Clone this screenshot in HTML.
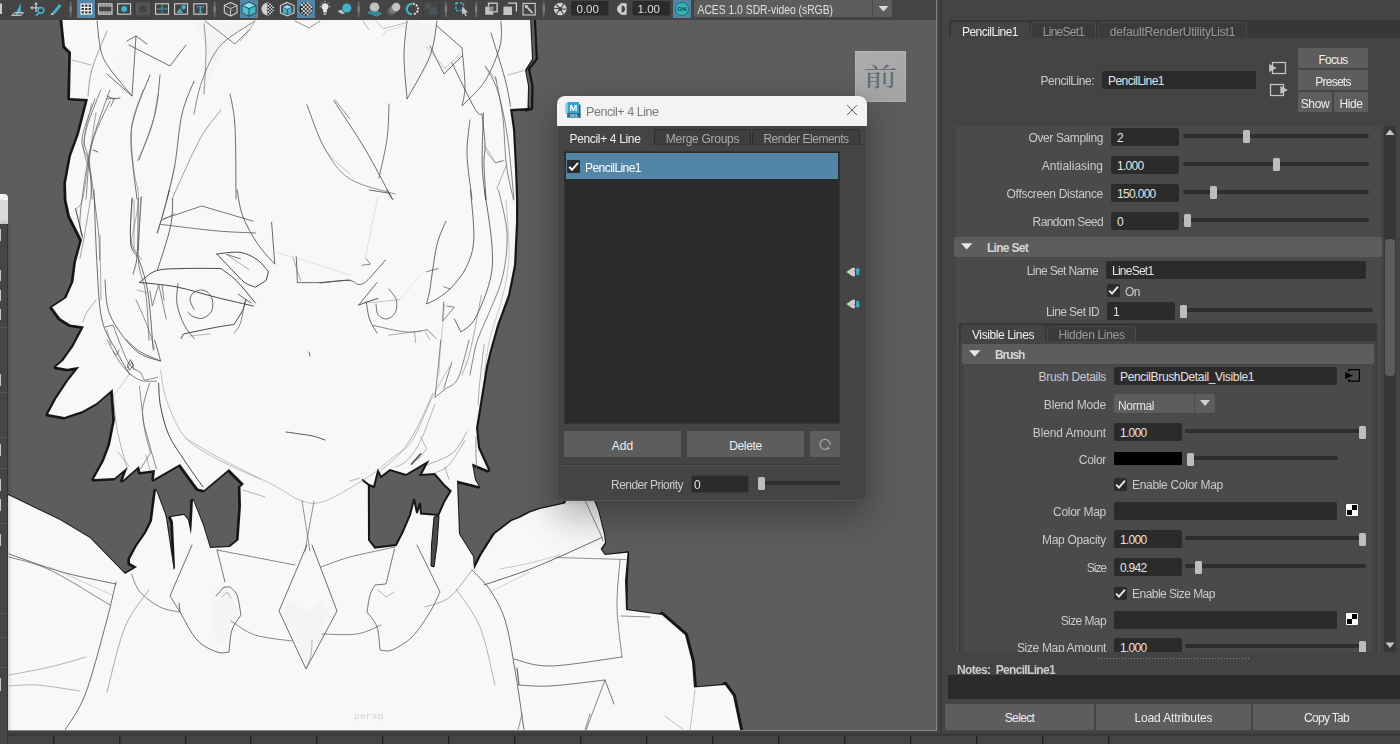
<!DOCTYPE html>
<html lang="en">
<head>
<meta charset="utf-8">
<title>Maya - Pencil+ 4 Line</title>
<style>
*{box-sizing:border-box;margin:0;padding:0}
html,body{width:1400px;height:744px;overflow:hidden;background:#444}
body{position:relative;font-family:"Liberation Sans","Noto Sans CJK JP",sans-serif;font-size:12px;color:#cacaca;line-height:1}
.a{position:absolute}
.t{position:absolute;white-space:nowrap;line-height:14px;height:14px;margin-top:1px}
.r{text-align:right}
.c{text-align:center}
.f{position:absolute;background:#2b2b2b;border-radius:2px;height:18px}
.f span{position:absolute;left:6px;top:3px;line-height:14px;color:#e4e4e4;white-space:nowrap}
.btn{position:absolute;background:#5d5d5d;color:#eee;text-align:center;white-space:nowrap;padding-top:1px}
.trk{position:absolute;height:4px;background:#2e2e2e;border-radius:2px}
.h{position:absolute;width:7px;height:13px;background:#bdbdbd;border-radius:1.5px;margin-top:1px}
.hdr{position:absolute;background:#5d5d5d;border-radius:2px}
.cb{position:absolute;width:13px;height:13px;background:#2b2b2b;border-radius:2px}
#vp{left:0;top:20px;width:936px;height:710px;background:#5d5d5d;overflow:hidden}
#tb{left:0;top:0;width:936px;height:20px;background:#444;overflow:hidden}
#rp{left:0;top:0;width:1400px;height:744px}
#dlg{left:557px;top:96px;width:310px;height:405px;background:#444;border-radius:8px;overflow:hidden;box-shadow:0 14px 36px 2px rgba(0,0,0,.30),0 0 6px rgba(0,0,0,.13)}
</style>
</head>
<body>
<!-- VIEWPORT -->
<div id="vp" class="a">
<!--VPSVG-->
<svg class="a" style="left:0;top:0" width="936" height="710" viewBox="0 20 936 710">
<g id="sil" stroke-linejoin="miter">
<path d="M62,17 L65,46 L71,52 L70,98 L88,99 L79,134 L71,156 L66,183 L66.5,200 L70,216 L82,240 L76,262 L73.4,282 L66.3,298 L52.2,307.2 L60.3,318.3 L70.3,324.4 L84,326.4 L73.4,346.6 L63.3,360.7 L56.2,366.7 L67.3,368.7 L79.4,366.7 L68.3,380.8 L56.2,399 L48.2,414 L64.3,417 L82.4,411 L96.6,403 L112.7,389 L115,420 L110,445 L104,461 L94,479 L114.5,478 L127.6,467 L123,480 L139,466 L140.4,472 L155,470 L154,479 L180,464 L198,488.5 L204,490 L229,469 L244,484 L240.5,487 L241,506 L238.6,540 L230,547 L210,548 L203,525 L197,510 L193,500 L192,520 L191,534.5 L188,520 L184,515 L171,517 L173,522 L175,568 L173.7,570 L170,545 L166,518 L165,514 L156,490 L152,521 L146,533 L137,546 L130,559 L130,563 L137,567 L125,574 L90,538 L60,520 L35,508 L6,494 L6,734 L741,734 L733,696 L725,685 L694,687.6 L692,662 L685,635 L662,615 L626,610 L625,581 L627.5,552.7 L604.7,555 L600.6,549 L605,542.6 L604,534.5 L598,510 L592.6,497 L568,497 L565,503.6 L540,509 L530,512.4 L520,517.7 L511.7,521 L494.8,534 L481.6,554.7 L474,569.8 L473,556.6 L459,534 L457,480.4 L478.8,486 L475,480 L472,463.5 L488,470 L478,448 L476,428 L480,403 L486,366 L490,350 L497,325 L508,295 L514,265 L516,222 L516,200 L515,170 L513,130 L510,109 L527.5,108 L528,86 L525,70 L532,59 L530,17 Z" transform="translate(-0.9,0.7)" fill="#141414" stroke="#141414" stroke-width="3.6" stroke-linejoin="round"/>
<g fill="none" stroke="#161616" stroke-linejoin="round" stroke-linecap="round">
<path d="M527.5,108 L510,109 L513,130 L515,170 L516,200 L516,222 L514,265 L508,295 L497,325 L490,350 L486,366 L480,403 L476,428 L478,448 L488,470" stroke-width="4.4"/>
<path d="M662,615 L685,635 L692,662 L694,687.6 M725,685 L733,696 L741,734" stroke-width="6"/>
<path d="M534.8,17 L536.8,59 L529,69 L532.5,86 L532,109 L526,110.5" stroke-width="2.2"/>
<path d="M627.5,552.7 L626,581 L626,610" stroke-width="3.4"/>
</g>
<path id="silp" d="M62,17 L65,46 L71,52 L70,98 L88,99 L79,134 L71,156 L66,183 L66.5,200 L70,216 L82,240 L76,262 L73.4,282 L66.3,298 L52.2,307.2 L60.3,318.3 L70.3,324.4 L84,326.4 L73.4,346.6 L63.3,360.7 L56.2,366.7 L67.3,368.7 L79.4,366.7 L68.3,380.8 L56.2,399 L48.2,414 L64.3,417 L82.4,411 L96.6,403 L112.7,389 L115,420 L110,445 L104,461 L94,479 L114.5,478 L127.6,467 L123,480 L139,466 L140.4,472 L155,470 L154,479 L180,464 L198,488.5 L204,490 L229,469 L244,484 L240.5,487 L241,506 L238.6,540 L230,547 L210,548 L203,525 L197,510 L193,500 L192,520 L191,534.5 L188,520 L184,515 L171,517 L173,522 L175,568 L173.7,570 L170,545 L166,518 L165,514 L156,490 L152,521 L146,533 L137,546 L130,559 L130,563 L137,567 L125,574 L90,538 L60,520 L35,508 L6,494 L6,734 L741,734 L733,696 L725,685 L694,687.6 L692,662 L685,635 L662,615 L626,610 L625,581 L627.5,552.7 L604.7,555 L600.6,549 L605,542.6 L604,534.5 L598,510 L592.6,497 L568,497 L565,503.6 L540,509 L530,512.4 L520,517.7 L511.7,521 L494.8,534 L481.6,554.7 L474,569.8 L473,556.6 L459,534 L457,480.4 L478.8,486 L475,480 L472,463.5 L488,470 L478,448 L476,428 L480,403 L486,366 L490,350 L497,325 L508,295 L514,265 L516,222 L516,200 L515,170 L513,130 L510,109 L527.5,108 L528,86 L525,70 L532,59 L530,17 Z" fill="#f8f8f8" stroke="#1c1c1c" stroke-width="1.8" paint-order="stroke fill"/>
<path d="M362,479.5 L369,485 L374,487 L378,471 L381,477 L390,470 L406,475 L427,462.6 L420.5,475 L434.6,474 L444,485 L450.6,491 L444,502 L438.4,515 L421,513.5 L420,503 L417,513 L414,499 L410,515 L402.7,532 L396,545 L375,547.6 L369,540 L368.8,485 Z" fill="#5d5d5d" stroke="#161616" stroke-width="2"/>
<path d="M434,517 L439,516 L437,545 L434,567 L431,566 L431.5,545 Z" fill="#4a4a4a" stroke="#161616" stroke-width="1"/>
</g>
<g id="shade" fill="#f0f0f0" stroke="none" opacity=".7">
<path d="M409,21 L404.5,54 L406.6,99 L430,65 L437.5,27 Z" opacity=".8"/>
<path d="M196,22 L210,60 L204,94 L222,50 L250,22 Z" opacity=".5"/>
<path d="M131,40 L134,95 L110,72 Z" opacity=".55"/>
<path d="M210,585 L228,588 L240,615 L232,630 L229,651 L215,640 Z" opacity=".6"/>
<path d="M290,600 L306,612 L322,600 L330,612 L306,667 L282,612 Z" opacity=".5"/>
</g>
<!--LINES-->
<g fill="none" stroke-linecap="round" stroke-linejoin="round">
<path d="M97.0,21.0C97.7,26.0 98.8,43.0 101.0,51.0C103.2,59.0 104.8,61.5 110.0,69.0C115.2,76.5 128.3,91.5 132.0,96.0" stroke="#404040" stroke-width="0.75"/>
<path d="M107.0,31.0C104.5,37.3 95.2,58.2 92.0,69.0C88.8,79.8 88.7,91.5 88.0,96.0" stroke="#777" stroke-width="0.7"/>
<path d="M127.0,41.0L136.0,36.0L147.0,44.0" stroke="#404040" stroke-width="0.75"/>
<path d="M129.0,45.0L170.0,66.0L186.0,45.0" stroke="#404040" stroke-width="0.75"/>
<path d="M136.0,36.0L132.0,96.0L107.0,74.0" stroke="#404040" stroke-width="0.75"/>
<path d="M150.0,75.0C147.5,81.5 138.2,102.5 135.0,114.0C131.8,125.5 130.7,129.8 131.0,144.0C131.3,158.2 136.0,189.8 137.0,199.0" stroke="#404040" stroke-width="0.75"/>
<path d="M160.0,75.0C159.2,81.5 158.5,99.8 155.0,114.0C151.5,128.2 141.7,152.3 139.0,160.0" stroke="#404040" stroke-width="0.75"/>
<path d="M194.0,81.0C192.0,86.5 185.2,100.2 182.0,114.0C178.8,127.8 177.5,149.8 175.0,164.0C172.5,178.2 168.3,193.2 167.0,199.0" stroke="#404040" stroke-width="0.75"/>
<path d="M221.0,110.0C217.5,114.8 208.2,124.2 200.0,139.0C191.8,153.8 176.7,189.0 172.0,199.0" stroke="#777" stroke-width="0.7"/>
<path d="M230.0,94.0C230.8,99.3 234.0,108.5 235.0,126.0C236.0,143.5 235.8,186.8 236.0,199.0" stroke="#404040" stroke-width="0.75"/>
<path d="M204.0,24.0C204.3,28.5 206.0,39.3 206.0,51.0C206.0,62.7 204.3,86.8 204.0,94.0" stroke="#666" stroke-width="0.7"/>
<path d="M255.0,21.0C249.2,25.2 228.8,36.0 220.0,46.0C211.2,56.0 206.3,69.7 202.0,81.0C197.7,92.3 195.3,108.5 194.0,114.0" stroke="#555" stroke-width="0.7"/>
<path d="M205.0,21.0L235.0,44.0L250.0,29.0" stroke="#555" stroke-width="0.7"/>
<path d="M295.0,21.0L309.0,28.0L320.0,21.0" stroke="#666" stroke-width="0.7"/>
<path d="M95.0,99.0C92.8,105.7 83.0,128.2 82.0,139.0C81.0,149.8 87.3,154.0 89.0,164.0C90.7,174.0 91.5,193.2 92.0,199.0" stroke="#555" stroke-width="0.7"/>
<path d="M110.0,101.0C107.0,108.2 96.0,127.7 92.0,144.0C88.0,160.3 87.0,189.8 86.0,199.0" stroke="#555" stroke-width="0.7"/>
<path d="M335.0,100.0L350.0,119.0" stroke="#666" stroke-width="0.7"/>
<path d="M307.0,105.0C310.0,112.3 317.8,137.5 325.0,149.0C332.2,160.5 345.8,169.8 350.0,174.0" stroke="#999" stroke-width="0.6"/>
<path d="M72.0,60.0L91.0,65.0" stroke="#888" stroke-width="0.6"/>
<path d="M107.0,96.0L113.0,99.0L120.0,98.0" stroke="#404040" stroke-width="0.8"/>
<path d="M93.0,150.0L98.0,152.0" stroke="#404040" stroke-width="0.8"/>
<path d="M100.7,90.0C98.0,97.6 86.6,123.5 84.7,135.7C82.8,147.9 87.0,147.0 89.3,163.0C91.6,179.0 96.7,215.5 98.4,231.7C100.1,247.9 99.4,255.3 99.6,260.0" stroke="#555" stroke-width="0.7"/>
<path d="M109.9,90.0C107.2,97.6 97.7,123.1 93.9,135.7C90.1,148.3 89.3,151.7 87.0,165.4C84.7,179.1 80.8,205.8 80.0,218.0C79.2,230.2 82.0,235.2 82.4,238.6" stroke="#555" stroke-width="0.7"/>
<path d="M91.6,103.7C90.3,110.9 83.6,134.1 83.6,147.0C83.6,159.9 91.2,168.1 91.6,181.4C92.0,194.7 87.8,214.2 85.9,227.0C84.0,239.8 81.0,252.8 80.0,258.0" stroke="#666" stroke-width="0.6"/>
<path d="M96.0,112.9C94.8,120.4 91.3,143.5 89.0,158.0C86.7,172.5 84.6,191.2 82.4,199.7C80.2,208.2 76.7,207.4 75.6,208.9" stroke="#666" stroke-width="0.6"/>
<path d="M75.6,208.9L82.4,236.3" stroke="#333" stroke-width="0.9"/>
<path d="M143.0,90.0C141.1,96.1 133.1,113.3 131.6,126.6C130.1,139.9 132.8,157.8 133.9,170.0C135.0,182.2 139.0,187.1 138.4,199.7C137.8,212.3 131.7,237.8 130.4,245.4L141.9,260.0" stroke="#777" stroke-width="0.6"/>
<path d="M157.9,94.6C156.8,100.3 154.4,117.9 151.0,128.9C147.6,140.0 139.6,155.6 137.3,160.9" stroke="#777" stroke-width="0.6"/>
<path d="M132.7,197.4C132.3,203.9 129.6,226.8 130.4,236.3C131.2,245.8 136.2,251.6 137.3,254.6" stroke="#666" stroke-width="0.6"/>
<path d="M140.7,197.4L138.4,250.0" stroke="#666" stroke-width="0.6"/>
<path d="M175.0,165.4C173.3,172.7 167.8,197.7 164.7,208.9C161.6,220.2 158.0,228.9 156.7,232.9" stroke="#777" stroke-width="0.6"/>
<path d="M175.0,213.4L162.4,220.3" stroke="#777" stroke-width="0.6"/>
<path d="M106.4,99.0L114.4,98.0L111.0,106.0" stroke="#555" stroke-width="0.7"/>
<path d="M407.0,21.0C406.5,26.8 404.0,43.0 404.0,56.0C404.0,69.0 406.5,91.8 407.0,99.0C410.8,91.8 425.0,69.0 430.0,56.0C435.0,43.0 435.8,26.8 437.0,21.0" stroke="#404040" stroke-width="0.75"/>
<path d="M437.0,26.0L462.0,48.0C462.5,54.3 465.0,76.3 465.0,86.0C465.0,95.7 462.5,102.7 462.0,106.0C465.8,101.8 478.7,91.0 485.0,81.0C491.3,71.0 497.3,56.0 500.0,46.0C502.7,36.0 500.8,25.2 501.0,21.0" stroke="#404040" stroke-width="0.75"/>
<path d="M430.0,46.0L444.0,74.0L462.0,56.0" stroke="#404040" stroke-width="0.75"/>
<path d="M452.0,63.0C455.8,70.7 470.0,100.5 475.0,109.0C480.0,117.5 480.8,113.2 482.0,114.0C482.5,119.0 484.7,135.7 485.0,144.0C485.3,152.3 483.8,154.8 484.0,164.0C484.2,173.2 485.7,193.2 486.0,199.0" stroke="#404040" stroke-width="0.75"/>
<path d="M491.0,33.0C493.3,40.7 501.8,66.8 505.0,79.0C508.2,91.2 509.6,101.5 510.5,106.0" stroke="#404040" stroke-width="0.75"/>
<path d="M470.0,120.0C469.5,125.7 466.7,140.8 467.0,154.0C467.3,167.2 471.2,191.5 472.0,199.0" stroke="#404040" stroke-width="0.75"/>
<path d="M485.0,66.0C487.0,69.8 493.3,77.7 497.0,89.0C500.7,100.3 504.2,115.7 507.0,134.0C509.8,152.3 512.8,188.2 514.0,199.0" stroke="#555" stroke-width="0.7"/>
<path d="M307.0,105.0C310.0,112.3 317.8,136.7 325.0,149.0C332.2,161.3 338.3,171.5 350.0,179.0C361.7,186.5 387.5,191.5 395.0,194.0" stroke="#666" stroke-width="0.7"/>
<path d="M334.0,101.0C338.7,108.2 354.3,131.5 362.0,144.0C369.7,156.5 375.0,166.8 380.0,176.0C385.0,185.2 390.0,195.2 392.0,199.0" stroke="#404040" stroke-width="0.75"/>
<path d="M389.0,104.0C388.7,109.8 388.7,126.7 387.0,139.0C385.3,151.3 380.3,171.5 379.0,178.0" stroke="#555" stroke-width="0.8"/>
<path d="M508.0,75.0L524.0,70.6" stroke="#888" stroke-width="0.6"/>
<path d="M485.0,150.0L495.0,163.0L503.0,161.0" stroke="#888" stroke-width="0.6"/>
<path d="M426.6,46.6L444.7,68.4L460.0,54.0" stroke="#999" stroke-width="0.5"/>
<path d="M495.5,76.8C496.7,83.5 501.0,102.0 502.8,116.7C504.6,131.4 504.6,151.1 506.4,165.0C508.2,178.9 512.4,194.2 513.6,200.0" stroke="#555" stroke-width="0.7"/>
<path d="M483.4,113.0C483.2,121.7 481.8,150.5 482.2,165.0C482.6,179.5 485.2,194.2 485.8,200.0" stroke="#444" stroke-width="0.8"/>
<path d="M484.6,145.7L495.5,162.6L504.0,160.2" stroke="#777" stroke-width="0.6"/>
<path d="M485.8,67.1L496.7,80.4" stroke="#777" stroke-width="0.6"/>
<path d="M506.4,165.0L496.7,189.0" stroke="#777" stroke-width="0.6"/>
<path d="M163.0,219.0L201.7,206.0L253.3,221.2" stroke="#555" stroke-width="0.8"/>
<path d="M160.9,224.4C170.2,225.5 201.0,229.5 216.8,230.9C232.6,232.3 249.1,232.7 255.5,233.0" stroke="#555" stroke-width="0.8"/>
<path d="M169.5,190.0L157.6,233.0" stroke="#444" stroke-width="0.8"/>
<path d="M172.7,198.6C172.3,203.3 173.0,214.8 170.5,226.6C168.0,238.4 159.8,262.4 157.6,269.6" stroke="#444" stroke-width="0.8"/>
<path d="M237.2,190.0C238.1,194.3 239.2,206.8 242.6,215.8C246.0,224.8 252.2,235.7 257.6,243.8C263.0,251.9 271.9,260.8 274.8,264.2L271.6,222.3" stroke="#444" stroke-width="0.8"/>
<path d="M139.4,282.5C142.3,280.5 149.1,272.9 156.6,270.6C164.1,268.3 173.8,268.9 184.5,268.5C195.2,268.1 214.9,268.5 221.0,268.5C223.5,270.5 230.2,274.6 236.0,280.3C241.8,286.1 252.2,299.2 255.5,303.0" stroke="#333" stroke-width="0.9"/>
<path d="M216.8,254.0C220.7,253.7 233.6,251.4 240.4,252.4C247.2,253.4 252.9,256.8 257.6,260.0C262.3,263.2 266.6,269.8 268.4,271.7L266.2,280.3L255.5,287.2C253.7,286.4 248.6,285.4 244.7,282.5C240.8,279.6 236.5,274.4 231.8,269.6C227.2,264.9 219.3,256.6 216.8,254.0" stroke="#333" stroke-width="0.9"/>
<path d="M226.5,254.5L249.0,269.6" stroke="#777" stroke-width="0.6"/>
<path d="M227.0,254.5L240.4,258.8" stroke="#555" stroke-width="0.8"/>
<path d="M139.4,282.5C145.5,283.2 163.1,284.3 176.0,286.8C188.9,289.3 203.9,294.3 216.8,297.5C229.7,300.7 247.2,304.6 253.3,306.0" stroke="#333" stroke-width="0.9"/>
<path d="M178.0,283.5C177.8,286.9 175.9,297.0 177.0,304.0C178.1,311.0 181.6,319.8 184.5,325.5C187.4,331.2 192.6,336.2 194.2,338.4" stroke="#444" stroke-width="0.8"/>
<path d="M194.0,309.4C193.3,307.8 190.2,302.7 190.0,300.0C189.8,297.3 191.2,294.7 193.0,293.0C194.8,291.3 198.1,290.1 200.6,290.0C203.1,289.9 206.0,290.8 208.0,292.5C210.0,294.2 211.7,297.1 212.4,300.0C213.1,302.9 212.9,307.3 212.0,310.0C211.1,312.7 208.9,314.6 207.0,316.0C205.1,317.4 203.1,318.5 200.6,318.5C198.1,318.5 194.1,317.1 192.0,316.0C189.9,314.9 188.7,312.7 188.0,312.0" stroke="#444" stroke-width="0.8"/>
<path d="M181.3,338.4L183.4,334.0C188.6,332.9 206.2,329.2 214.6,327.6C223.0,326.0 230.8,324.9 234.0,324.4C235.4,322.1 240.6,314.5 242.6,310.4C244.6,306.3 245.3,301.5 245.8,299.7" stroke="#333" stroke-width="0.9"/>
<path d="M238.3,294.3L251.2,303.0" stroke="#444" stroke-width="0.8"/>
<path d="M244.7,301.8C244.0,305.4 242.2,318.1 240.4,323.3C238.6,328.5 235.1,331.4 234.0,333.0" stroke="#555" stroke-width="0.7"/>
<path d="M190.0,336.0L210.0,334.0" stroke="#888" stroke-width="0.6"/>
<path d="M131.8,198.6C131.6,206.1 129.5,233.4 130.8,243.8C132.1,254.2 136.5,252.8 139.4,261.0C142.3,269.2 145.7,278.4 148.0,293.2C150.3,308.0 152.4,340.5 153.3,350.0" stroke="#444" stroke-width="0.8"/>
<path d="M138.3,198.6C138.1,207.9 138.1,241.9 137.2,254.5C136.3,267.1 133.7,270.7 133.0,273.9" stroke="#444" stroke-width="0.8"/>
<path d="M141.5,196.5C141.0,206.9 137.6,242.7 138.3,258.8C139.0,274.9 144.0,279.6 145.8,293.2C147.6,306.8 148.5,332.6 149.0,340.5" stroke="#555" stroke-width="0.7"/>
<path d="M134.0,200.0L134.0,248.0" stroke="#777" stroke-width="0.6"/>
<path d="M150.0,291.0L152.3,306.0L158.7,284.6L166.2,319.0" stroke="#555" stroke-width="0.7"/>
<path d="M162.0,284.6L164.0,300.0" stroke="#555" stroke-width="0.7"/>
<path d="M137.2,290.0L148.0,293.2" stroke="#777" stroke-width="0.6"/>
<path d="M136.0,299.7C138.0,304.4 144.9,319.4 148.0,327.6C151.1,335.8 153.3,345.4 154.4,349.0" stroke="#666" stroke-width="0.7"/>
<path d="M296.3,256.7L297.4,282.5C301.2,282.5 311.2,282.9 320.0,282.5C328.8,282.1 345.0,280.4 350.0,280.0" stroke="#444" stroke-width="0.8"/>
<path d="M293.0,257.7L300.6,280.3" stroke="#777" stroke-width="0.6"/>
<path d="M277.0,252.4C284.2,254.6 307.8,261.5 320.0,265.3C332.2,269.1 345.0,273.4 350.0,275.0" stroke="#ccc" stroke-width="0.5"/>
<path d="M94.0,190.0C94.5,202.5 95.7,243.3 97.0,265.0C98.3,286.7 98.7,305.5 102.0,320.0C105.3,334.5 112.3,342.8 117.0,352.0C121.7,361.2 127.8,371.2 130.0,375.0" stroke="#404040" stroke-width="0.75"/>
<path d="M105.0,280.0C105.8,285.8 105.0,303.3 110.0,315.0C115.0,326.7 126.7,342.3 135.0,350.0C143.3,357.7 155.8,359.2 160.0,361.0" stroke="#404040" stroke-width="0.75"/>
<path d="M100.0,235.0L101.0,300.0" stroke="#777" stroke-width="0.6"/>
<path d="M96.0,300.0C94.5,302.0 89.2,308.3 87.0,312.0C84.8,315.7 83.7,320.3 83.0,322.0" stroke="#777" stroke-width="0.6"/>
<path d="M105.0,327.0L113.0,325.0C115.5,331.2 123.5,354.2 128.0,362.0C132.5,369.8 138.0,370.3 140.0,372.0" stroke="#555" stroke-width="0.7"/>
<path d="M107.0,330.0L111.0,345.0" stroke="#777" stroke-width="0.6"/>
<path d="M113.0,352.0L117.0,355.0L119.0,350.0" stroke="#555" stroke-width="0.7"/>
<path d="M127.0,368.0L132.0,362.0L134.0,370.0" stroke="#555" stroke-width="0.7"/>
<path d="M369.5,190.0L388.8,193.2L393.0,199.7" stroke="#444" stroke-width="0.8"/>
<path d="M386.7,190.0L391.0,196.0" stroke="#444" stroke-width="0.8"/>
<path d="M378.0,196.5L365.0,258.8" stroke="#ccc" stroke-width="0.5"/>
<path d="M320.0,283.0C324.7,282.6 341.7,280.0 348.0,280.3C354.3,280.6 356.0,283.9 357.6,284.6C359.0,284.1 361.5,285.5 366.2,281.4C370.9,277.3 382.4,263.5 385.6,259.9" stroke="#444" stroke-width="0.8"/>
<path d="M362.0,265.3L370.5,264.2L366.2,258.8" stroke="#555" stroke-width="0.7"/>
<path d="M358.7,305.0L377.0,282.5" stroke="#444" stroke-width="0.8"/>
<path d="M358.7,305.0C361.2,304.1 370.6,300.8 373.8,299.7C377.0,298.6 377.3,298.8 378.0,298.6" stroke="#333" stroke-width="0.9"/>
<path d="M366.2,301.8C366.8,304.7 367.7,313.8 369.5,319.0C371.3,324.2 375.8,330.7 377.0,333.0" stroke="#444" stroke-width="0.8"/>
<path d="M388.8,289.0C390.1,290.8 395.2,295.8 396.3,299.7C397.4,303.6 396.9,309.4 395.3,312.6C393.7,315.8 389.6,318.6 386.7,319.0C383.8,319.4 379.8,317.2 378.0,314.7C376.2,312.2 376.3,305.8 376.0,304.0" stroke="#555" stroke-width="0.8"/>
<path d="M366.0,303.0L399.6,299.7" stroke="#888" stroke-width="0.5"/>
<path d="M373.8,325.5C379.2,326.6 397.1,331.3 406.0,332.0C414.9,332.7 423.9,330.2 427.5,329.8L436.0,338.4" stroke="#555" stroke-width="0.7"/>
<path d="M388.8,335.2L421.0,330.9" stroke="#777" stroke-width="0.6"/>
<path d="M414.6,332.0L415.7,342.7" stroke="#777" stroke-width="0.6"/>
<path d="M425.4,332.0L430.0,340.0" stroke="#888" stroke-width="0.6"/>
<path d="M445.8,221.2C444.4,225.0 439.5,234.7 437.2,243.8C434.9,252.9 433.1,268.1 431.8,276.0C430.6,283.9 430.6,286.3 429.7,291.0C428.8,295.7 427.0,301.8 426.5,304.0C428.3,303.1 433.1,301.3 437.2,298.6C441.3,295.9 446.4,293.0 451.2,287.8C456.0,282.6 462.4,275.4 466.2,267.4C470.0,259.3 473.1,252.4 473.8,239.5C474.5,226.6 471.1,198.2 470.5,190.0" stroke="#444" stroke-width="0.8"/>
<path d="M426.5,271.7L438.3,268.5" stroke="#555" stroke-width="0.7"/>
<path d="M443.7,286.8L450.0,289.0" stroke="#555" stroke-width="0.7"/>
<path d="M484.5,190.0C485.8,199.3 491.1,230.9 492.0,246.0C492.9,261.1 492.9,268.1 490.0,280.3C487.1,292.5 479.7,310.4 474.8,319.0C469.9,327.6 463.2,329.8 460.9,332.0L454.4,319.0" stroke="#444" stroke-width="0.8"/>
<path d="M443.7,301.8L442.6,321.2L454.4,307.2L447.0,306.0" stroke="#555" stroke-width="0.7"/>
<path d="M498.5,190.0C499.9,197.2 506.3,218.7 507.0,233.0C507.7,247.3 505.6,263.1 502.8,276.0C500.0,288.9 494.0,300.4 490.0,310.4C486.0,320.4 481.5,329.6 479.0,336.2C476.5,342.8 476.3,343.5 474.8,350.0C473.3,356.5 470.8,370.8 470.0,375.0" stroke="#555" stroke-width="0.7"/>
<path d="M481.3,295.4C479.5,304.5 473.7,336.7 470.5,350.0C467.3,363.3 463.4,370.8 462.0,375.0" stroke="#777" stroke-width="0.6"/>
<path d="M444.7,304.0C444.0,311.7 441.3,338.2 440.4,350.0C439.4,361.8 439.2,370.8 439.0,375.0" stroke="#999" stroke-width="0.5"/>
<path d="M506.0,200.0C506.5,209.2 509.5,239.2 509.0,255.0C508.5,270.8 506.2,281.2 503.0,295.0C499.8,308.8 493.2,324.7 490.0,338.0C486.8,351.3 485.0,368.8 484.0,375.0" stroke="#999" stroke-width="0.5"/>
<path d="M420.0,275.0L400.0,300.0" stroke="#ccc" stroke-width="0.4"/>
<path d="M309.0,352.0L310.0,356.0" stroke="#444" stroke-width="0.8"/>
<path d="M286.0,432.0C288.3,432.3 295.5,433.3 300.0,434.0C304.5,434.7 308.8,435.0 313.0,436.0C317.2,437.0 323.0,439.3 325.0,440.0" stroke="#444" stroke-width="0.9"/>
<path d="M185.0,438.0C191.7,441.8 210.0,453.0 225.0,461.0C240.0,469.0 262.2,479.3 275.0,486.0C287.8,492.7 293.7,498.5 302.0,501.0C310.3,503.5 314.0,505.0 325.0,501.0C336.0,497.0 356.8,484.2 368.0,477.0C379.2,469.8 384.7,464.0 392.0,458.0C399.3,452.0 405.3,451.0 412.0,441.0C418.7,431.0 425.7,410.5 432.0,398.0C438.3,385.5 447.0,371.3 450.0,366.0" stroke="#999" stroke-width="0.6"/>
<path d="M302.0,501.0L310.0,551.0" stroke="#666" stroke-width="0.7"/>
<path d="M314.0,501.0L305.0,551.0" stroke="#666" stroke-width="0.7"/>
<path d="M243.0,490.0L265.0,497.0" stroke="#888" stroke-width="0.6"/>
<path d="M350.0,481.0L360.0,478.0" stroke="#888" stroke-width="0.6"/>
<path d="M118.0,452.0L129.0,466.0" stroke="#888" stroke-width="0.6"/>
<path d="M146.0,455.0L150.0,470.0" stroke="#888" stroke-width="0.6"/>
<path d="M158.6,383.3C158.9,387.2 158.9,397.9 160.6,406.5C162.3,415.1 164.7,425.7 168.7,434.8C172.7,443.9 179.1,452.3 184.8,461.0C190.5,469.7 200.0,482.7 203.0,487.0" stroke="#333" stroke-width="0.9"/>
<path d="M160.6,370.0C161.6,375.1 162.7,389.4 166.7,400.5C170.7,411.6 176.4,427.1 184.8,436.8C193.2,446.6 204.5,452.0 217.0,459.0C229.5,466.0 252.8,475.7 260.0,479.0" stroke="#999" stroke-width="0.6"/>
<path d="M149.6,383.3C148.4,388.2 142.5,402.4 142.5,412.6C142.5,422.9 147.2,435.4 149.6,444.8C151.9,454.2 155.4,465.0 156.6,469.0" stroke="#555" stroke-width="0.7"/>
<path d="M139.5,386.4C140.3,393.4 142.7,417.6 144.5,428.7C146.3,439.8 149.6,448.9 150.6,452.9L140.5,469.0" stroke="#666" stroke-width="0.7"/>
<path d="M113.3,394.4C114.0,400.4 114.9,418.3 117.3,430.7C119.7,443.1 125.7,462.6 127.4,469.0" stroke="#888" stroke-width="0.6"/>
<path d="M107.2,340.0C109.0,343.3 114.8,354.6 118.3,360.0C121.8,365.4 124.7,368.9 128.4,372.3C132.1,375.7 135.8,378.8 140.5,380.3C145.2,381.8 153.9,381.1 156.6,381.3" stroke="#555" stroke-width="0.7"/>
<path d="M130.4,360.0L133.4,365.2L129.4,370.2L127.4,365.2L130.4,360.0" stroke="#444" stroke-width="0.8"/>
<path d="M126.4,340.0C128.8,342.0 134.8,348.5 140.5,352.0C146.2,355.5 157.2,359.5 160.6,361.0C160.1,359.2 158.6,353.5 157.6,350.0C156.6,346.5 155.1,341.7 154.6,340.0" stroke="#444" stroke-width="0.8"/>
<path d="M129.4,373.3C128.2,375.1 125.0,380.7 122.3,384.4C119.6,388.1 114.8,393.6 113.3,395.4" stroke="#999" stroke-width="0.5"/>
<path d="M140.5,372.3L144.5,380.3L157.6,377.3" stroke="#666" stroke-width="0.7"/>
<path d="M440.8,340.0C440.0,348.4 436.8,380.8 435.8,390.4C434.8,400.0 435.0,396.3 434.8,397.5C436.5,396.1 440.9,392.6 444.8,389.4C448.7,386.2 454.0,386.5 458.0,378.3C462.0,370.1 467.2,346.4 469.0,340.0" stroke="#555" stroke-width="0.7"/>
<path d="M451.9,362.2L443.8,388.4" stroke="#555" stroke-width="0.7"/>
<path d="M432.7,393.4C430.0,399.3 422.0,418.8 416.6,428.7C411.2,438.6 406.6,445.8 400.5,452.9C394.4,459.9 383.7,468.0 380.3,471.0" stroke="#888" stroke-width="0.6"/>
<path d="M434.8,404.5C432.4,410.6 425.3,431.4 420.6,440.8C415.9,450.2 410.8,456.6 406.5,461.0C402.2,465.4 396.9,466.0 395.0,467.0" stroke="#888" stroke-width="0.6"/>
<path d="M484.2,344.0C483.5,350.1 481.0,370.2 480.0,380.3C479.0,390.4 478.3,400.5 478.0,404.5" stroke="#777" stroke-width="0.6"/>
<path d="M467.0,431.7C464.6,435.2 459.6,447.3 452.9,452.9C446.2,458.4 431.1,463.0 426.7,465.0" stroke="#777" stroke-width="0.6"/>
<path d="M465.0,440.8C462.3,444.8 453.9,459.6 448.9,465.0C443.9,470.4 437.1,471.7 434.8,473.0" stroke="#888" stroke-width="0.6"/>
<path d="M420.6,436.8L426.7,448.9L416.6,461.0" stroke="#888" stroke-width="0.6"/>
<path d="M420.6,454.0L411.6,464.0" stroke="#555" stroke-width="1.8"/>
<path d="M476.0,436.8C476.0,440.2 475.8,450.3 476.0,457.0C476.2,463.7 477.2,473.7 477.5,477.0" stroke="#666" stroke-width="0.7"/>
<path d="M444.8,467.0L448.9,479.0" stroke="#777" stroke-width="0.6"/>
<path d="M307.0,545.0L279.0,611.0L306.0,669.0L337.0,611.0L312.0,545.0" stroke="#404040" stroke-width="0.75"/>
<path d="M192.0,545.0L170.0,596.0C171.7,598.7 175.5,604.7 180.0,612.0C184.5,619.3 190.8,633.3 197.0,640.0C203.2,646.7 211.7,650.0 217.0,652.0C222.3,654.0 227.0,652.0 229.0,652.0C229.5,648.3 230.0,636.2 232.0,630.0C234.0,623.8 239.5,617.5 241.0,615.0C240.3,611.7 238.8,599.7 237.0,595.0C235.2,590.3 231.2,588.3 230.0,587.0L224.0,587.0L216.0,596.0" stroke="#404040" stroke-width="0.75"/>
<path d="M217.0,550.0L225.0,582.0" stroke="#555" stroke-width="0.8"/>
<path d="M179.0,603.0L180.0,612.0" stroke="#444" stroke-width="0.8"/>
<path d="M131.5,574.0C132.9,577.0 135.2,586.5 140.0,592.0C144.8,597.5 153.5,603.7 160.0,607.0C166.5,610.3 175.8,611.2 179.0,612.0" stroke="#555" stroke-width="0.7"/>
<path d="M231.0,621.0C235.0,623.3 244.8,631.7 255.0,635.0C265.2,638.3 285.8,640.0 292.0,641.0" stroke="#555" stroke-width="0.7"/>
<path d="M217.0,550.0L295.0,565.0" stroke="#555" stroke-width="0.7"/>
<path d="M321.0,567.0C325.8,565.3 337.7,560.3 350.0,557.0C362.3,553.7 387.5,548.7 395.0,547.0" stroke="#555" stroke-width="0.7"/>
<path d="M322.0,634.0C327.8,634.0 347.2,635.5 357.0,634.0C366.8,632.5 377.0,626.5 381.0,625.0" stroke="#555" stroke-width="0.7"/>
<path d="M312.0,640.0C311.8,642.5 312.0,650.2 311.0,655.0C310.0,659.8 306.8,666.7 306.0,669.0" stroke="#888" stroke-width="0.6"/>
<path d="M9.0,554.0C17.8,557.0 44.2,567.0 62.0,572.0C79.8,577.0 107.0,582.0 116.0,584.0" stroke="#404040" stroke-width="0.75"/>
<path d="M9.0,557.0C15.8,559.2 33.2,562.0 50.0,570.0C66.8,578.0 100.0,599.2 110.0,605.0" stroke="#555" stroke-width="0.7"/>
<path d="M50.0,567.0L112.0,595.0" stroke="#aaa" stroke-width="0.5"/>
<path d="M116.0,582.0C114.2,589.5 110.2,608.2 105.0,627.0C99.8,645.8 91.7,677.8 85.0,695.0C78.3,712.2 68.3,724.2 65.0,730.0" stroke="#404040" stroke-width="0.75"/>
<path d="M149.0,590.0C145.0,596.2 132.0,610.0 125.0,627.0C118.0,644.0 110.0,681.2 107.0,692.0" stroke="#777" stroke-width="0.6"/>
<path d="M9.0,675.0C15.8,673.7 37.2,670.0 50.0,667.0C62.8,664.0 80.0,658.7 86.0,657.0" stroke="#888" stroke-width="0.6"/>
<path d="M9.0,686.0C13.7,685.8 25.2,684.2 37.0,685.0C48.8,685.8 72.8,690.0 80.0,691.0" stroke="#888" stroke-width="0.6"/>
<path d="M222.0,597.0L227.0,592.0L231.0,598.0" stroke="#888" stroke-width="0.6"/>
<path d="M394.5,549.0L386.0,584.0L375.0,585.0C374.2,586.7 371.3,590.5 370.0,595.0C368.7,599.5 367.5,609.2 367.0,612.0C368.7,614.5 374.8,620.7 377.0,627.0C379.2,633.3 379.5,646.2 380.0,650.0C382.0,650.0 386.7,652.2 392.0,650.0C397.3,647.8 405.7,643.3 412.0,637.0C418.3,630.7 425.3,619.5 430.0,612.0C434.7,604.5 438.3,595.3 440.0,592.0L417.0,545.0" stroke="#555" stroke-width="0.8"/>
<path d="M378.0,590.0L386.0,597.0L394.0,592.0" stroke="#888" stroke-width="0.6"/>
<path d="M425.0,607.0C429.2,605.3 442.2,603.2 450.0,597.0C457.8,590.8 468.3,574.5 472.0,570.0" stroke="#777" stroke-width="0.6"/>
<path d="M472.0,570.0C475.0,573.3 484.5,581.7 490.0,590.0C495.5,598.3 500.8,606.7 505.0,620.0C509.2,633.3 511.8,651.7 515.0,670.0C518.2,688.3 522.5,720.0 524.0,730.0" stroke="#404040" stroke-width="0.75"/>
<path d="M456.0,589.0C460.0,595.3 473.5,611.0 480.0,627.0C486.5,643.0 492.5,675.3 495.0,685.0" stroke="#888" stroke-width="0.6"/>
<path d="M490.0,592.0L530.0,572.0" stroke="#aaa" stroke-width="0.5"/>
<path d="M556.0,557.5L626.0,559.5" stroke="#666" stroke-width="0.7"/>
<path d="M620.0,560.0C619.5,567.8 616.7,590.8 617.0,607.0C617.3,623.2 621.2,648.7 622.0,657.0" stroke="#555" stroke-width="0.7"/>
<path d="M514.0,659.0C520.0,660.2 532.0,666.3 550.0,666.0C568.0,665.7 610.0,658.5 622.0,657.0" stroke="#555" stroke-width="0.8"/>
<path d="M519.0,685.0C524.2,685.2 535.7,686.8 550.0,686.0C564.3,685.2 595.8,681.0 605.0,680.0L614.0,704.0" stroke="#555" stroke-width="0.8"/>
<path d="M605.0,680.0L586.0,730.0" stroke="#555" stroke-width="0.7"/>
<path d="M621.0,616.0L650.0,617.0" stroke="#666" stroke-width="0.7"/>
<path d="M517.0,668.0L519.0,685.0" stroke="#666" stroke-width="1.2"/>
<path d="M665.0,716.0L697.0,740.0" stroke="#999" stroke-width="0.6"/>
<path d="M522.0,714.0L518.0,730.0" stroke="#666" stroke-width="0.7"/>
<path d="M590.0,714.0L585.0,730.0" stroke="#666" stroke-width="0.7"/>
<path d="M695.0,690.0L690.0,731.0" stroke="#999" stroke-width="0.6"/>
<path d="M585.0,500.0C586.5,503.3 591.2,513.8 594.0,520.0C596.8,526.2 600.6,534.0 602.0,537.5C603.4,541.0 602.4,540.4 602.5,541.0" stroke="#555" stroke-width="0.7"/>
<path d="M484.0,585.0C490.8,582.7 512.9,575.5 525.0,571.0C537.1,566.5 543.8,563.6 556.6,558.0C569.4,552.4 594.4,540.9 602.0,537.5" stroke="#444" stroke-width="0.8"/>
<path d="M500.0,569.0C505.0,568.0 520.0,565.3 530.0,563.0C540.0,560.7 555.0,556.3 560.0,555.0" stroke="#999" stroke-width="0.5"/>
<path d="M362.9,20.9L368.6,29.4" stroke="#888" stroke-width="0.6"/>
<path d="M375.7,20.9L383.6,28.7L407.9,22.3" stroke="#999" stroke-width="0.6"/>
<path d="M382.0,36.0L386.0,31.0L407.0,25.0" stroke="#bbb" stroke-width="0.5"/>
<path d="M240.0,41.0C241.3,39.5 245.6,35.1 248.0,32.0C250.4,28.9 253.2,23.9 254.3,22.3" stroke="#888" stroke-width="0.6"/>
</g>
<!--/LINES-->
</svg>
<!--/VPSVG-->
<div class="a" style="left:855px;top:31px;width:51px;height:51px;background:linear-gradient(160deg,#adadad,#a3a3a3);box-shadow:inset 0 0 0 1px rgba(255,255,255,.13)"></div>
<div class="a" style="left:855px;top:39.5px;width:51px;height:36px;line-height:36px;transform:scale(1.13,.84);text-align:center;font-family:'Liberation Serif','Noto Serif CJK SC',serif;font-size:30px;color:#5a6670;opacity:.9">前</div>
<div class="a" style="left:354px;top:691px;font-family:'Liberation Mono','DejaVu Sans Mono',monospace;font-size:9.5px;letter-spacing:.2px;color:#d2d2d2;line-height:12px">persp</div>

</div>
<!-- TOOLBAR -->
<div id="tb" class="a">
<!--TBSVG-->
<svg class="a" style="left:0;top:0" width="940" height="19" viewBox="0 0 940 19" font-family="Liberation Sans,sans-serif">
<rect x="0" y="3.5" width="2" height="10.5" fill="#c8c8c8"/>
<!-- 1 persp plane -->
<path d="M16 12.6L20.8 3.4V12.2L16 15.4Z" fill="#3fb1cc"/><path d="M11.5 15.5L14.5 12.5H23.5L21 15.5Z" fill="none" stroke="#bdbdbd" stroke-width="1"/><path d="M13 14H22.5" stroke="#bdbdbd" stroke-width=".8"/>
<!-- 2 arrows+magnifier -->
<path d="M36 3.5V12M31.5 7.8H40.5" stroke="#c8c8c8" stroke-width="1.3" fill="none"/><path d="M36 2L38 4.6H34ZM30 7.8L32.6 5.8V9.8Z" fill="#c8c8c8"/><circle cx="41" cy="10.3" r="2.9" fill="none" stroke="#3fb1cc" stroke-width="1.5"/><path d="M39 12.6L36 15.8" stroke="#3fb1cc" stroke-width="1.8"/>
<!-- 3 pencil -->
<path d="M52.5 12.2L59.2 4L61.5 5.9L54.8 14Z" fill="#3fb1cc"/><path d="M50.3 15.3L52.3 12.6L54.4 14.3Z" fill="#d8d8d8"/>
<!-- sep -->
<g fill="#7c7c7c"><rect x="70.2" y="1.5" width="1" height="15.5"/><rect x="69.5" y="5.5" width="2.4" height="7"/>
<rect x="214.2" y="1.5" width="1" height="15.5"/><rect x="213.5" y="5.5" width="2.4" height="7"/>
<rect x="358.2" y="1.5" width="1" height="15.5"/><rect x="357.5" y="5.5" width="2.4" height="7"/>
<rect x="445.4" y="1.5" width="1" height="15.5"/><rect x="444.7" y="5.5" width="2.4" height="7"/>
<rect x="475.7" y="1.5" width="1" height="15.5"/><rect x="475" y="5.5" width="2.4" height="7"/>
<rect x="543.3" y="1.5" width="1" height="15.5"/><rect x="542.6" y="5.5" width="2.4" height="7"/></g>
<!-- 4 grid selected -->
<rect x="77" y="0" width="18" height="18" fill="#5285a6"/>
<rect x="81" y="4" width="10.6" height="10" fill="#2e3336"/><g stroke="#f0f0f0" stroke-width="1.2" fill="none"><rect x="81" y="4" width="10.6" height="10"/><path d="M84.5 4V14M88 4V14M81 7.4H91.6M81 10.7H91.6"/></g>
<!-- 5 film gate -->
<g stroke="#d0d0d0" fill="none"><rect x="98.5" y="3.8" width="13.5" height="10.4" stroke-width="1.1"/><path d="M98.5 6H112M98.5 12H112" stroke-width="1"/><path d="M100 4.9H111M100 13.1H111" stroke-width="1.2" stroke-dasharray="1.6 1.3"/></g>
<!-- 6 rect w/ dot -->
<rect x="117.6" y="3.8" width="13" height="10.4" fill="none" stroke="#d0d0d0" stroke-width="1.1"/><circle cx="124.2" cy="9" r="2.9" fill="#3fb1cc"/>
<!-- 7 disabled -->
<rect x="134.2" y="0" width="17.7" height="18" fill="#3a3a3a"/><rect x="135" y="1" width="16.2" height="16" fill="#484848"/><rect x="136" y="3.1" width="14" height="11.8" fill="#555"/><circle cx="142.9" cy="9" r="3.8" fill="#434343"/>
<!-- 8 dotted cross -->
<rect x="155.5" y="3.8" width="13" height="10.4" fill="none" stroke="#d0d0d0" stroke-width="1.1"/><path d="M157 9H167.5M162 4.5V13.5" stroke="#3fb1cc" stroke-width="1.5" stroke-dasharray="1.2 1"/>
<!-- 9 image plane -->
<rect x="174.6" y="3.8" width="13" height="10.4" fill="none" stroke="#d0d0d0" stroke-width="1.1"/><circle cx="183.6" cy="7.2" r="2.2" fill="#3fb1cc"/><path d="M176.6 13L179.8 8.2L183 13Z" fill="#3fb1cc"/>
<!-- 10 T -->
<rect x="193.8" y="3.8" width="13" height="10.4" fill="none" stroke="#d0d0d0" stroke-width="1.1"/><text x="200.3" y="13" font-family="Liberation Serif,serif" font-weight="bold" font-size="11" text-anchor="middle" fill="#3fb1cc">T</text>
<!-- 11 wire cube -->
<g stroke="#d4d4d4" stroke-width="1.1" fill="none" stroke-linejoin="round"><path d="M230.6 2.6L237 5.6V12.8L230.6 16L224.3 12.8V5.6Z"/><path d="M224.3 5.6L230.6 8.6L237 5.6M230.6 8.6V16" stroke-width=".9"/><path d="M224.3 12.8L230.6 9.8L237 12.8M230.6 2.6V9.8" stroke-width=".5" stroke="#888"/></g>
<!-- 12 shaded cube selected -->
<rect x="240" y="0" width="18" height="18" fill="#5285a6"/>
<path d="M249 2.2L256 5.4L249 8.6L242 5.4Z" fill="#86e0ea"/><path d="M242 5.4L249 8.6V16.2L242 12.8Z" fill="#4cc3d4"/><path d="M256 5.4L249 8.6V16.2L256 12.8Z" fill="#41b6ca"/><path d="M249 2.2L256 5.4V12.8L249 16.2L242 12.8V5.4ZM242 5.4L249 8.6L256 5.4M249 8.6V16.2" fill="none" stroke="#2c3e4a" stroke-width=".9" stroke-linejoin="round"/>
<!-- 13 half sphere checker -->
<clipPath id="c13"><circle cx="267.8" cy="9" r="6.4"/></clipPath><g clip-path="url(#c13)"><rect x="261" y="2" width="6.7" height="14" fill="#cdcdcd"/><rect x="267.6" y="2" width="7" height="14" fill="#161616"/><g fill="#ececec"><rect x="267.6" y="1.8" width="1.6" height="1.6"/><rect x="267.6" y="5.0" width="1.6" height="1.6"/><rect x="267.6" y="8.2" width="1.6" height="1.6"/><rect x="267.6" y="11.4" width="1.6" height="1.6"/><rect x="267.6" y="14.6" width="1.6" height="1.6"/><rect x="269.2" y="3.4" width="1.6" height="1.6"/><rect x="269.2" y="6.6" width="1.6" height="1.6"/><rect x="269.2" y="9.8" width="1.6" height="1.6"/><rect x="269.2" y="13.0" width="1.6" height="1.6"/><rect x="270.8" y="1.8" width="1.6" height="1.6"/><rect x="270.8" y="5.0" width="1.6" height="1.6"/><rect x="270.8" y="8.2" width="1.6" height="1.6"/><rect x="270.8" y="11.4" width="1.6" height="1.6"/><rect x="270.8" y="14.6" width="1.6" height="1.6"/><rect x="272.4" y="3.4" width="1.6" height="1.6"/><rect x="272.4" y="6.6" width="1.6" height="1.6"/><rect x="272.4" y="9.8" width="1.6" height="1.6"/><rect x="272.4" y="13.0" width="1.6" height="1.6"/><rect x="274.0" y="1.8" width="1.6" height="1.6"/><rect x="274.0" y="5.0" width="1.6" height="1.6"/><rect x="274.0" y="8.2" width="1.6" height="1.6"/><rect x="274.0" y="11.4" width="1.6" height="1.6"/><rect x="274.0" y="14.6" width="1.6" height="1.6"/></g></g>
<!-- 14 wire on shaded -->
<path d="M287.2 2.4L294 5.6V12.8L287.2 16L280.4 12.8V5.6Z" fill="none" stroke="#d4d4d4" stroke-width="1.1"/><path d="M287.2 5L291.6 7L287.2 9L282.8 7Z" fill="#8fe0ee"/><path d="M282.8 7.6L286.8 9.5V14.6L282.8 12.6ZM291.6 7.6L287.7 9.5V14.6L291.6 12.6Z" fill="#3fb1cc"/>
<!-- 15 textured selected -->
<rect x="297" y="0" width="18" height="18" fill="#5285a6"/><circle cx="306" cy="9" r="6.6" fill="#2a2a2a"/><g fill="#e0e0e0"><rect x="301" y="4.2" width="1.9" height="1.9"/><rect x="304.8" y="4.2" width="1.9" height="1.9"/><rect x="308.6" y="4.2" width="1.9" height="1.9"/><rect x="302.9" y="6.1" width="1.9" height="1.9"/><rect x="306.7" y="6.1" width="1.9" height="1.9"/><rect x="310.3" y="6.1" width="1.6" height="1.9"/><rect x="301" y="8" width="1.9" height="1.9"/><rect x="304.8" y="8" width="1.9" height="1.9"/><rect x="308.6" y="8" width="1.9" height="1.9"/><rect x="302.9" y="9.9" width="1.9" height="1.9"/><rect x="306.7" y="9.9" width="1.9" height="1.9"/><rect x="310.3" y="9.9" width="1.6" height="1.9"/><rect x="301.6" y="11.8" width="1.3" height="1.6"/><rect x="304.8" y="11.8" width="1.9" height="1.9"/><rect x="308.6" y="11.8" width="1.9" height="1.6"/><rect x="303.4" y="2.7" width="1.4" height="1.5"/><rect x="306.7" y="2.5" width="1.9" height="1.7"/><rect x="306.7" y="13.7" width="1.9" height="1.6"/><rect x="303.4" y="13.7" width="1.4" height="1.2"/></g>
<!-- 16 bulb -->
<path d="M325 3.2A3.5 3.5 0 0 1 327 9.6L326.8 12.6H323.2L323 9.6A3.5 3.5 0 0 1 325 3.2Z" fill="#e4e4e4"/><rect x="323.6" y="13.3" width="2.8" height="1.6" fill="#bbb"/><path d="M325 .8V2M319.6 6.4H320.9M329.1 6.4H330.4M321 2.6L321.9 3.5M329 2.6L328.1 3.5" stroke="#d0d0d0" stroke-width="1"/>
<!-- 17 blue sphere + shadow -->
<path d="M337.5 11.5L341 9.5L345 13.5L341 14Z" fill="#c8c8c8"/><path d="M338.6 12L341.6 14" stroke="#444" stroke-width=".6"/><circle cx="346.8" cy="8" r="4.6" fill="#3fb1cc"/>
<!-- 18 sphere over grid -->
<circle cx="374.5" cy="7.2" r="4.8" fill="#c2c2c2"/><path d="M368 12.5L372 10.5L381.5 13.5L376.5 16Z" fill="none" stroke="#3fb1cc" stroke-width=".9"/><path d="M370 11.5L379 14.7M372 13.5L376.5 11.2M374.5 14.7L379 12.4" stroke="#3fb1cc" stroke-width=".8"/>
<!-- 19 motion blur spheres -->
<circle cx="391" cy="11.6" r="4" fill="#5c5c5c"/><circle cx="393.5" cy="9.6" r="4" fill="#7a7a7a"/><circle cx="396.2" cy="7" r="4.2" fill="#c4c4c4"/>
<!-- 20 AO ring -->
<path d="M412 3.8A5.2 5.2 0 0 0 412 14.2" fill="none" stroke="#3fb1cc" stroke-width="2.3"/><path d="M412.8 3.8A5.2 5.2 0 0 1 412.8 14.2" fill="none" stroke="#e4e4e4" stroke-width="2" stroke-dasharray="2 1.2"/>
<!-- 21 disabled -->
<rect x="422.2" y="0" width="17.7" height="18" fill="#3a3a3a"/><rect x="423" y="1" width="16.1" height="16" fill="#444"/><rect x="425" y="3.1" width="5.9" height="5.8" fill="#4a5355"/><rect x="429" y="7.1" width="8.1" height="7.8" fill="#44555a"/>
<!-- 22 select dashed + cursor -->
<rect x="456" y="3" width="7.5" height="7.5" fill="none" stroke="#3fb1cc" stroke-width="1.5" stroke-dasharray="2.4 1.6"/><path d="M462.2 6.5L468.2 12.4L465.4 12.5L466.8 15.6L465.4 16.2L464 13.1L462.2 14.8Z" fill="#c8c8c8"/>
<!-- 23 two squares -->
<rect x="488.5" y="3.2" width="8.6" height="8.6" fill="none" stroke="#d0d0d0" stroke-width="1.3"/><rect x="485" y="6.4" width="8.6" height="8.6" fill="#c4c4c4" stroke="#444" stroke-width=".5"/><rect x="489.2" y="7.2" width="3.8" height="3.8" fill="#8a8a8a"/>
<!-- 24 -->
<path d="M508 3.2H516.4V11.5" fill="none" stroke="#d0d0d0" stroke-width="1.3"/><rect x="503.4" y="6.6" width="8.6" height="8.4" fill="#c4c4c4"/>
<!-- 25 -->
<rect x="523" y="3.4" width="12.2" height="11.6" fill="none" stroke="#d0d0d0" stroke-width="1.1"/><path d="M525.6 5.6L532.5 13" stroke="#d0d0d0" stroke-width="1.8"/><path d="M524.6 4.8L528.4 5.4L525.3 8.4Z" fill="#d0d0d0"/>
<!-- 26 aperture -->
<circle cx="560.2" cy="9" r="6.3" fill="#cfcfcf"/><g stroke="#444" stroke-width="1.1"><path d="M556 4.4L561 9.5M563.8 3.8L560.2 9.8M566.4 9L559.4 9.4M563.6 14.3L559.8 8.6M556.4 13.8L560.6 8.4M554 8.2L560.4 8.8"/></g><circle cx="560.2" cy="9" r="1.9" fill="#444"/>
<!-- field 0.00 -->
<rect x="571" y="1" width="37.6" height="14.4" rx="2" fill="#2b2b2b"/><text x="576.5" y="12.8" font-size="11.5" fill="#dedede">0.00</text>
<!-- 27 gamma -->
<rect x="620.4" y="3.2" width="6.2" height="11.6" fill="#d0d0d0"/><path d="M621.6 4.4A4.6 4.6 0 0 0 621.6 13.6Z" fill="#d0d0d0"/><path d="M621.6 5.6A3.4 3.4 0 0 1 621.6 12.4Z" fill="#444"/>
<!-- field 1.00 -->
<rect x="632.4" y="1" width="37.6" height="14.4" rx="2" fill="#2b2b2b"/><text x="637.6" y="12.8" font-size="11.5" fill="#dedede">1.00</text>
<!-- 28 ON -->
<rect x="673" y="0" width="18" height="18" fill="#5285a6"/><circle cx="682" cy="9" r="6.6" fill="#35b2b6" stroke="#1c5f6a" stroke-width=".8"/><text x="682" y="11.4" font-size="6.2" font-weight="bold" text-anchor="middle" fill="#12444c">ON</text>
<!-- ACES dropdown -->
<rect x="694" y="0" width="198" height="17" rx="2" fill="#5d5d5d"/><rect x="872" y="0" width="1" height="17" fill="#4a4a4a"/><path d="M878.5 6H888.5L883.5 11.5Z" fill="#d8d8d8"/>
<text x="697.5" y="13.9" font-size="12" fill="#e0e0e0" textLength="135.5" lengthAdjust="spacingAndGlyphs">ACES 1.0 SDR-video (sRGB)</text>
</svg>
<!--/TBSVG-->
</div>
<!-- LEFT PANEL -->
<!--MISC-->
<!-- left panel -->
<div class="a" style="left:0;top:194px;width:8px;height:30px;background:#dadada;border-radius:0 4px 0 0;border-top:6px solid #f4f4f4"></div>
<div class="a" style="left:0;top:224px;width:8px;height:520px;background:#464646;border-right:1px solid #333;box-shadow:0 0 5px rgba(0,0,0,.3)"></div>
<div class="a" style="left:0;top:224px;width:7px;height:520px">
<div class="a" style="left:0;top:5px;width:1px;height:12px;background:#c8c8c8"></div>
<div class="a" style="left:0;top:46px;width:1px;height:11px;background:#c8c8c8"></div>
<div class="a" style="left:0;top:66px;width:1px;height:11px;background:#c8c8c8"></div>
<div class="a" style="left:0;top:85px;width:1px;height:11px;background:#c8c8c8"></div>
<div class="a" style="left:0;top:150px;width:1px;height:12px;background:#c8c8c8"></div>
<div class="a" style="left:0;top:220px;width:1px;height:12px;background:#c8c8c8"></div>
<div class="a" style="left:0;top:255px;width:1px;height:12px;background:#c8c8c8"></div>
<div class="a" style="left:0;top:275px;width:1px;height:12px;background:#c8c8c8"></div>
<div class="a" style="left:0;top:310px;width:1px;height:12px;background:#c8c8c8"></div>
<div class="a" style="left:0;top:454px;width:1px;height:13px;background:#c8c8c8"></div>
<div class="a" style="left:0;top:103px;width:7px;height:1px;background:#5a5a5a"></div>
<div class="a" style="left:0;top:168px;width:7px;height:1px;background:#5a5a5a"></div>
<div class="a" style="left:0;top:213px;width:7px;height:1px;background:#5a5a5a"></div>
<div class="a" style="left:0;top:244px;width:7px;height:1px;background:#5a5a5a"></div>
<div class="a" style="left:0;top:299px;width:7px;height:1px;background:#5a5a5a"></div>
<div class="a" style="left:0;top:389px;width:7px;height:1px;background:#5a5a5a"></div>
<div class="a" style="left:0;top:413px;width:7px;height:1px;background:#5a5a5a"></div>
<div class="a" style="left:0;top:443px;width:7px;height:1px;background:#5a5a5a"></div>
</div>
<!-- bottom -->
<div class="a" style="left:8px;top:733px;width:1392px;height:3px;background:linear-gradient(#3c3c3c,#383838)"></div>
<div class="a" style="left:8px;top:736px;width:1392px;height:8px;background:#444"></div>
<svg class="a" style="left:0;top:736px" width="1400" height="9"><g fill="#242424">
<rect x="53" y="0" width="1.4" height="9"/><rect x="119" y="0" width="1.4" height="9"/><rect x="185" y="0" width="1.4" height="9"/><rect x="250" y="0" width="1.4" height="9"/><rect x="316" y="0" width="1.4" height="9"/><rect x="382" y="0" width="1.4" height="9"/><rect x="448" y="0" width="1.4" height="9"/><rect x="514" y="0" width="1.4" height="9"/><rect x="580" y="0" width="1.4" height="9"/><rect x="646" y="0" width="1.4" height="9"/><rect x="712" y="0" width="1.4" height="9"/><rect x="778" y="0" width="1.4" height="9"/><rect x="844" y="0" width="1.4" height="9"/><rect x="910" y="0" width="1.4" height="9"/><rect x="976" y="0" width="1.4" height="9"/><rect x="1042" y="0" width="1.4" height="9"/><rect x="1108" y="0" width="1.4" height="9"/></g></svg>
<!--/MISC-->
<!-- RIGHT PANEL -->
<div id="rp" class="a">
<div class="a" style="left:940px;top:0;width:2px;height:733px;background:#393939"></div>
<div class="a" style="left:936px;top:0;width:1px;height:731px;background:#868686"></div>
<div class="a" style="left:8px;top:730px;width:929px;height:1px;background:#868686"></div>
<!-- tab bar -->
<div class="a" style="left:949px;top:20px;width:451px;height:18px;background:#373737"></div>
<div class="a" style="left:951px;top:22px;width:79px;height:17px;background:#444;border-radius:3px 3px 0 0"></div>
<div class="a" style="left:1031px;top:22px;width:65px;height:16px;background:#3b3b3b;border:1px solid #4a4a4a;border-bottom:0;border-radius:3px 3px 0 0"></div>
<div class="a" style="left:1098px;top:22px;width:149px;height:16px;background:#3b3b3b;border:1px solid #4a4a4a;border-bottom:0;border-radius:3px 3px 0 0"></div>
<div class="t c" style="letter-spacing:-0.55px;left:950px;top:24px;width:80px;color:#eee">PencilLine1</div>
<div class="t c" style="letter-spacing:-0.75px;left:1031px;top:24px;width:65px;color:#999">LineSet1</div>
<div class="t c" style="letter-spacing:-0.19px;left:1098px;top:24px;width:149px;color:#999">defaultRenderUtilityList1</div>
<!-- node name row -->
<div class="t r" style="letter-spacing:-0.48px;left:994px;top:73px;width:100px">PencilLine:</div>
<div class="f" style="left:1102px;top:71px;width:154px"><span style="letter-spacing:-0.55px;">PencilLine1</span></div>
<svg class="a" style="left:1268px;top:59px" width="22" height="40" viewBox="0 0 22 40">
<rect x="4.5" y="3.5" width="13" height="11" fill="none" stroke="#c4c4c4" stroke-width="1.3"/><path d="M1.2 5L8.6 9L1.2 13Z" fill="#c4c4c4"/>
<rect x="2.5" y="25.5" width="13" height="11" fill="none" stroke="#c4c4c4" stroke-width="1.3"/><path d="M12.4 27L19.8 31L12.4 35Z" fill="#c4c4c4"/>
</svg>
<div class="btn" style="letter-spacing:-0.76px;left:1298px;top:48px;width:70px;height:20px;line-height:22px">Focus</div>
<div class="btn" style="letter-spacing:-0.77px;left:1298px;top:70px;width:70px;height:20px;line-height:22px">Presets</div>
<div class="btn" style="letter-spacing:-0.36px;left:1298px;top:92px;width:34px;height:20px;line-height:22px">Show</div>
<div class="btn" style="letter-spacing:-0.37px;left:1334px;top:92px;width:34px;height:20px;line-height:22px">Hide</div>
<!-- scroll area -->
<div class="a" style="left:956px;top:126px;width:425px;height:526px;background:#4a4a4a"></div>
<div class="a" style="left:1384px;top:126px;width:12px;height:526px;background:#373737"></div>
<div class="a" style="left:1385px;top:239px;width:10px;height:137px;background:#5d5d5d;border-radius:4px"></div>
<svg class="a" style="left:1384px;top:126px" width="12" height="12"><path d="M1.5 9L6 3.5L10.5 9Z" fill="#c8c8c8"/></svg>
<svg class="a" style="left:1384px;top:639px" width="12" height="12"><path d="M1.5 3.5L6 9L10.5 3.5Z" fill="#c8c8c8"/></svg>
<!-- rows 1 -->
<div class="t r" style="letter-spacing:-0.37px;left:960px;top:130px;width:143px">Over Sampling</div>
<div class="f" style="left:1111px;top:128px;width:68px"><span>2</span></div>
<div class="trk" style="left:1183px;top:134px;width:186px"></div><div class="h" style="left:1243px;top:129px"></div>
<div class="t r" style="letter-spacing:-0.02px;left:960px;top:158px;width:143px">Antialiasing</div>
<div class="f" style="left:1111px;top:156px;width:68px"><span style="letter-spacing:-0.71px;">1.000</span></div>
<div class="trk" style="left:1183px;top:162px;width:186px"></div><div class="h" style="left:1273px;top:157px"></div>
<div class="t r" style="letter-spacing:-0.3px;left:960px;top:186px;width:143px">Offscreen Distance</div>
<div class="f" style="left:1111px;top:184px;width:68px"><span style="letter-spacing:-0.68px;">150.000</span></div>
<div class="trk" style="left:1183px;top:190px;width:186px"></div><div class="h" style="left:1210px;top:185px"></div>
<div class="t r" style="letter-spacing:-0.57px;left:960px;top:214px;width:143px">Random Seed</div>
<div class="f" style="left:1111px;top:212px;width:68px"><span>0</span></div>
<div class="trk" style="left:1183px;top:218px;width:186px"></div><div class="h" style="left:1184px;top:213px"></div>
<!-- Line Set header -->
<div class="hdr" style="left:954px;top:237px;width:428px;height:20px"></div>
<svg class="a" style="left:960px;top:242px" width="14" height="9"><path d="M1 1.2H12.4L6.7 7.6Z" fill="#e8e8e8"/></svg>
<div class="t" style="letter-spacing:-0.71px;left:987px;top:240px;font-weight:bold;color:#d4d4d4">Line Set</div>
<div class="t r" style="letter-spacing:-0.63px;left:960px;top:263px;width:138px">Line Set Name</div>
<div class="f" style="left:1106px;top:261px;width:260px"><span style="letter-spacing:-0.75px;">LineSet1</span></div>
<div class="cb" style="left:1107px;top:284px"></div>
<svg class="a" style="left:1107px;top:284px" width="13" height="13"><path d="M2.2 6.6L5 9.6L11 2.6" fill="none" stroke="#e6e6e6" stroke-width="2"/></svg>
<div class="t" style="letter-spacing:-0.61px;left:1125px;top:284px">On</div>
<div class="t r" style="letter-spacing:-0.58px;left:960px;top:304px;width:139px">Line Set ID</div>
<div class="f" style="left:1107px;top:302px;width:68px"><span>1</span></div>
<div class="trk" style="left:1180px;top:308px;width:193px"></div><div class="h" style="left:1180px;top:304px"></div>
<!-- inner tab widget -->
<div class="a" style="left:959px;top:323px;width:418px;height:329px;background:#444"></div>
<div class="a" style="left:959px;top:323px;width:418px;height:18px;background:#373737"></div>
<div class="a" style="left:961px;top:325px;width:84px;height:16px;background:#444;border-radius:3px 3px 0 0"></div>
<div class="a" style="left:1047px;top:326px;width:89px;height:15px;background:#3b3b3b;border:1px solid #4a4a4a;border-bottom:0;border-radius:3px 3px 0 0"></div>
<div class="t c" style="letter-spacing:-0.39px;left:961px;top:327px;width:84px;color:#eee">Visible Lines</div>
<div class="t c" style="letter-spacing:-0.32px;left:1047px;top:327px;width:89px;color:#999">Hidden Lines</div>
<div class="a" style="left:959px;top:341px;width:1px;height:311px;background:#3a3a3a"></div>
<div class="a" style="left:1376px;top:341px;width:1px;height:311px;background:#3a3a3a"></div>
<!-- Brush header -->
<div class="hdr" style="left:962px;top:344px;width:412px;height:20px"></div>
<svg class="a" style="left:968px;top:349px" width="14" height="9"><path d="M1 1.2H12.4L6.7 7.6Z" fill="#e8e8e8"/></svg>
<div class="t" style="letter-spacing:-1.09px;left:995px;top:347px;font-weight:bold;color:#d4d4d4">Brush</div>
<div class="a" style="left:964px;top:365px;width:408px;height:287px;background:#4a4a4a"></div>
<div class="t r" style="letter-spacing:-0.3px;left:960px;top:369px;width:146px">Brush Details</div>
<div class="f" style="left:1114px;top:367px;width:223px"><span style="letter-spacing:-0.35px;">PencilBrushDetail_Visible1</span></div>
<svg class="a" style="left:1344px;top:368px" width="18" height="15"><path d="M4.7 3.8V1.6H15.4V13.2H4.7V11" fill="none" stroke="#000" stroke-width="1.2"/><path d="M1.2 4.2L9 7.4L1.2 10.8Z" fill="#000"/></svg>
<div class="t r" style="letter-spacing:-0.19px;left:960px;top:397px;width:146px">Blend Mode</div>
<div class="a" style="left:1114px;top:394px;width:101px;height:19px;background:#5d5d5d;border-radius:2px"></div>
<div class="a" style="left:1194px;top:394px;width:1px;height:19px;background:#4a4a4a"></div>
<div class="t" style="letter-spacing:-0.45px;left:1118px;top:398px;color:#e4e4e4">Normal</div>
<svg class="a" style="left:1199px;top:399px" width="12" height="8"><path d="M1 1H11L6 7Z" fill="#d0d0d0"/></svg>
<div class="t r" style="letter-spacing:-0.13px;left:960px;top:425px;width:146px">Blend Amount</div>
<div class="f" style="left:1114px;top:423px;width:68px"><span style="letter-spacing:-0.71px;">1.000</span></div>
<div class="trk" style="left:1185px;top:429px;width:181px"></div><div class="h" style="left:1359px;top:425px"></div>
<div class="t r" style="letter-spacing:-0.3px;left:960px;top:452px;width:146px">Color</div>
<div class="a" style="left:1114px;top:452px;width:68px;height:13px;background:#000;border-radius:1px"></div>
<div class="trk" style="left:1188px;top:456px;width:150px"></div><div class="h" style="left:1187px;top:452px"></div>
<div class="cb" style="left:1114px;top:478px"></div>
<svg class="a" style="left:1114px;top:478px" width="13" height="13"><path d="M2.2 6.6L5 9.6L11 2.6" fill="none" stroke="#e6e6e6" stroke-width="2"/></svg>
<div class="t" style="letter-spacing:-0.32px;left:1132px;top:477px">Enable Color Map</div>
<div class="t r" style="letter-spacing:-0.26px;left:960px;top:504px;width:146px">Color Map</div>
<div class="f" style="left:1114px;top:502px;width:223px"></div>
<svg class="a" style="left:1346px;top:504px" width="12" height="12"><rect width="12" height="12" rx="1.2" fill="#fff"/><rect x="6" y="1" width="5" height="5" fill="#000"/><rect x="1" y="6" width="5" height="5" fill="#000"/></svg>
<div class="t r" style="letter-spacing:-0.31px;left:960px;top:532px;width:146px">Map Opacity</div>
<div class="f" style="left:1114px;top:530px;width:68px"><span style="letter-spacing:-0.71px;">1.000</span></div>
<div class="trk" style="left:1185px;top:536px;width:181px"></div><div class="h" style="left:1359px;top:532px"></div>
<div class="t r" style="letter-spacing:-1.04px;left:960px;top:560px;width:146px">Size</div>
<div class="f" style="left:1114px;top:558px;width:68px"><span style="letter-spacing:-0.71px;">0.942</span></div>
<div class="trk" style="left:1185px;top:564px;width:181px"></div><div class="h" style="left:1195px;top:560px"></div>
<div class="cb" style="left:1114px;top:587px"></div>
<svg class="a" style="left:1114px;top:587px" width="13" height="13"><path d="M2.2 6.6L5 9.6L11 2.6" fill="none" stroke="#e6e6e6" stroke-width="2"/></svg>
<div class="t" style="letter-spacing:-0.52px;left:1132px;top:586px">Enable Size Map</div>
<div class="t r" style="letter-spacing:-0.59px;left:960px;top:613px;width:146px">Size Map</div>
<div class="f" style="left:1114px;top:611px;width:223px"></div>
<svg class="a" style="left:1346px;top:613px" width="12" height="12"><rect width="12" height="12" rx="1.2" fill="#fff"/><rect x="6" y="1" width="5" height="5" fill="#000"/><rect x="1" y="6" width="5" height="5" fill="#000"/></svg>
<div class="a" style="left:956px;top:635px;width:425px;height:17px;overflow:hidden">
<div class="t r" style="letter-spacing:-0.33px;left:4px;top:5px;width:146px">Size Map Amount</div>
<div class="f" style="left:158px;top:3px;width:68px"><span style="letter-spacing:-0.71px;">1.000</span></div>
<div class="trk" style="left:229px;top:9px;width:181px"></div><div class="h" style="left:403px;top:5px"></div>
</div>
<!-- notes -->
<div class="a" style="left:1098px;top:658px;width:151px;height:1px;background:repeating-linear-gradient(90deg,#8c8c8c 0 1px,transparent 1px 3px)"></div>
<div class="t" style="letter-spacing:-0.67px;left:957px;top:662px;font-weight:bold;color:#ccc">Notes:&nbsp; PencilLine1</div>
<div class="a" style="left:948px;top:675px;width:452px;height:24px;background:#2b2b2b"></div>
<div class="btn" style="letter-spacing:-0.64px;left:945px;top:704px;width:149px;height:26px;line-height:27px">Select</div>
<div class="btn" style="letter-spacing:-0.14px;left:1096px;top:704px;width:155px;height:26px;line-height:27px">Load Attributes</div>
<div class="btn" style="letter-spacing:-0.69px;left:1253px;top:704px;width:147px;height:26px;line-height:27px">Copy Tab</div>

</div>
<!-- DIALOG -->
<div id="dlg" class="a">
<!--DLG-->
<div class="a" style="left:0;top:0;width:310px;height:30px;background:#f3f3f3"></div>
<svg class="a" style="left:8px;top:5px" width="18" height="18" viewBox="0 0 18 18">
<path d="M.3 2.4L2.6 1.1V12L.3 13Z" fill="#82cde8"/>
<rect x="2.6" y="1" width="11.4" height="11" fill="#34a6d1"/>
<path d="M14 3.4H15.5V16.7H14Z" fill="#245f7b"/>
<rect x="2.1" y="12" width="13.4" height="4.7" fill="#2a6c89"/>
<text x="8.3" y="10.2" font-family="Liberation Sans,sans-serif" font-weight="bold" font-size="9.4" fill="#fff" text-anchor="middle">M</text>
<text x="8.8" y="15.7" font-family="Liberation Sans,sans-serif" font-weight="bold" font-size="2.8" fill="#d4e8f0" fill-opacity=".8" text-anchor="middle">MAYA</text>
</svg>
<div class="t" style="letter-spacing:-0.45px;left:29px;top:8px;color:#7a7a7a;font-size:12.5px">Pencil+ 4 Line</div>
<svg class="a" style="left:288px;top:8px" width="14" height="14"><path d="M2.2 1.2L12 11M12 1.2L2.2 11" stroke="#5a5a5a" stroke-width="1" fill="none"/></svg>
<!-- tabs -->
<div class="t c" style="letter-spacing:-0.34px;left:6px;top:35px;width:84px;color:#eee">Pencil+ 4 Line</div>
<div class="a" style="left:97px;top:33px;width:97px;height:16px;background:#3e3e3e;border:1px solid #2f2f2f;border-bottom:0;border-radius:3px 3px 0 0"></div>
<div class="a" style="left:195px;top:33px;width:108px;height:16px;background:#3e3e3e;border:1px solid #2f2f2f;border-bottom:0;border-radius:3px 3px 0 0"></div>
<div class="a" style="left:97px;top:48px;width:213px;height:1px;background:#383838"></div>
<div class="t c" style="letter-spacing:-0.28px;left:97px;top:35px;width:97px;color:#aaa">Merge Groups</div>
<div class="t c" style="letter-spacing:-0.5px;left:195px;top:35px;width:108px;color:#aaa">Render Elements</div>
<!-- list -->
<div class="a" style="left:7px;top:55px;width:276px;height:273px;background:#2b2b2b;border:1px solid #333;border-radius:2px"></div>
<div class="a" style="left:9px;top:57px;width:272px;height:26px;background:#5285a6"></div>
<div class="a" style="left:10px;top:64px;width:13px;height:13px;background:#2b2b2b;border-radius:1px"></div>
<svg class="a" style="left:10px;top:64px" width="13" height="13"><path d="M2.2 6.8L5 9.8L11 2.8" fill="none" stroke="#f0f0f0" stroke-width="2"/></svg>
<div class="t" style="letter-spacing:-0.55px;left:28px;top:64px;color:#fff">PencilLine1</div>
<!-- arrows -->
<svg class="a" style="left:289px;top:170px" width="16" height="12"><path d="M.4 6L6.4 1.7H9V10.3H6.4Z" fill="#cdcdcd"/><path d="M11.7 1.2L15.2 5.3H13.4V9.3H10V5.3H8.3Z" fill="#3fb1cc" stroke="#333" stroke-width=".5"/></svg>
<svg class="a" style="left:289px;top:202px" width="16" height="12"><path d="M.4 6L6.4 1.7H9V10.3H6.4Z" fill="#cdcdcd"/><path d="M11.7 10.6L15.2 6.5H13.4V2.5H10V6.5H8.3Z" fill="#3fb1cc" stroke="#333" stroke-width=".5"/></svg>
<!-- buttons -->
<div class="btn" style="letter-spacing:-0.02px;left:7px;top:335px;width:117px;height:26px;line-height:28px">Add</div>
<div class="btn" style="letter-spacing:-0.36px;left:130px;top:335px;width:117px;height:26px;line-height:28px">Delete</div>
<div class="btn" style="left:253px;top:335px;width:30px;height:26px"></div>
<svg class="a" style="left:261px;top:341px" width="14" height="14"><path d="M9.6 11.6A5 5 0 1 1 11.9 8.2" fill="none" stroke="#a8a8a8" stroke-width="1.2"/><path d="M9.2 9.2L12 11.9L9 12.3Z" fill="#a8a8a8"/></svg>
<div class="a" style="left:7px;top:368px;width:276px;height:2px;background:#363636;border-bottom:1px solid #525252"></div>
<div class="t r" style="letter-spacing:-0.54px;left:20px;top:381px;width:106px">Render Priority</div>
<div class="f" style="left:134px;top:379px;width:58px;border:1px solid #3a3a3a"><span style="left:2px;top:2px">0</span></div>
<div class="trk" style="left:204px;top:385px;width:79px"></div><div class="h" style="left:201px;top:380px"></div>
<div class="a" style="left:0;top:30px;width:310px;height:375px;border:1px solid rgba(255,255,255,.1);border-top:0;border-radius:0 0 8px 8px"></div>
<!--/DLG-->
</div>
</body>
</html>
